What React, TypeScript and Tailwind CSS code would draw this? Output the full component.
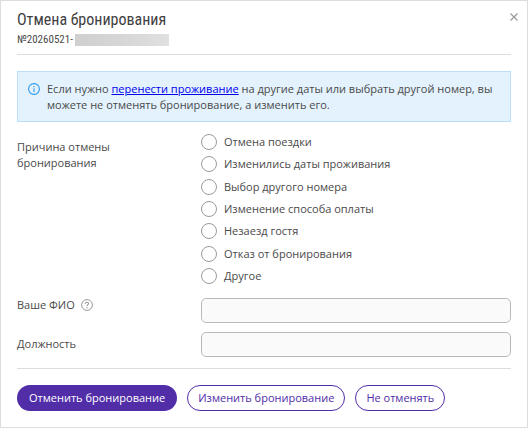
import { useId, useState } from "react";

const reasons = [
  "Отмена поездки",
  "Изменились даты проживания",
  "Выбор другого номера",
  "Изменение способа оплаты",
  "Незаезд гостя",
  "Отказ от бронирования",
  "Другое",
];

const condensed = "font-['Roboto_Condensed','Liberation_Sans_Narrow',Roboto,sans-serif]";

function InfoIcon() {
  return (
    <svg className="mt-[2px] size-3 shrink-0" viewBox="0 0 12 12" fill="none" stroke="#2b9af0" aria-hidden="true">
      <circle cx="6" cy="6" r="5.4" strokeWidth="1.1" />
      <path d="M6 5.2V9" strokeWidth="1.1" />
      <path d="M6 3V4.2" strokeWidth="1.1" />
    </svg>
  );
}

function HelpIcon() {
  return (
    <svg className="size-3 shrink-0" viewBox="0 0 12 12" fill="none" stroke="#999999" aria-hidden="true">
      <circle cx="6" cy="6" r="5.4" strokeWidth="1" />
      <path d="M4.4 4.8C4.4 3.7 5.1 3.2 6 3.2s1.6.5 1.6 1.4C7.6 5.6 6 5.7 6 7" strokeWidth="1.1" />
      <path d="M6 8.1V9.2" strokeWidth="1.1" />
    </svg>
  );
}

function Field({ label, help }: { label: string; help?: boolean }) {
  const id = useId();
  return (
    <div className={`grid grid-cols-[184px_1fr] ${help ? "items-start" : "items-center"}`}>
      <div className="flex items-center gap-[6px] pb-[2px] leading-[14px]">
        <label htmlFor={id}>{label}</label>
        {help && <HelpIcon />}
      </div>
      <input
        id={id}
        type="text"
        className="h-[25px] w-full rounded-[5px] border border-[#b9b9b9] bg-[#fafafa] px-2 outline-none focus:border-[#512da8]"
      />
    </div>
  );
}

export default function App() {
  const [reason, setReason] = useState("");
  const outline =
    "h-[26px] rounded-full border border-[#512da8] bg-white px-[10px] text-[#512da8]";

  return (
    <main className="min-h-screen border border-[#dddddd] bg-white px-4 pt-2 pb-4 font-['Open_Sans','Noto_Sans',sans-serif] text-[11px] leading-4 text-[#4a4a4a]">
      <header className="flex items-start justify-between border-b border-[#dddddd] pb-[5px]">
        <div>
          <h1 className={`text-[16px] leading-[22px] text-[#3f3f3f] ${condensed}`}>Отмена бронирования</h1>
          <div className={`flex items-center gap-[2px] text-[11px] leading-[18px] ${condensed}`}>
            <span>№20260521-</span>
            <span className="h-3 w-[94px] bg-linear-to-r from-[#cfcfcf] via-[#d6d6d6] to-[#e0e0e0]" />
          </div>
        </div>
        <button type="button" aria-label="Закрыть" className="-mr-2 mt-[3px] p-px">
          <svg className="size-2" viewBox="0 0 8 8" stroke="#999999" strokeWidth="1.2" aria-hidden="true">
            <path d="M.5.5l7 7M7.5.5l-7 7" />
          </svg>
        </button>
      </header>

      <div className="mt-4 flex gap-[7px] border border-[#bbdefb] bg-[#e3f2fd] px-[10px] pt-[9px] pb-2">
        <InfoIcon />
        <p>
          Если нужно{" "}
          <a href="#" className="text-[#0000ee] underline">
            перенести проживание
          </a>{" "}
          на другие даты или выбрать другой номер, вы можете не отменять бронирование, а изменить его.
        </p>
      </div>

      <form className="mt-2">
        <div role="radiogroup" aria-labelledby="reason" className="grid grid-cols-[184px_1fr]">
          <div id="reason" className="w-[120px] pt-[9px]">
            Причина отмены бронирования
          </div>
          <div className="flex min-h-[154px] flex-col justify-between pt-1">
            {reasons.map((r) => (
              <label key={r} className="flex items-center gap-[7px]">
                <input
                  type="radio"
                  name="reason"
                  checked={reason === r}
                  onChange={() => setReason(r)}
                  className="size-4 shrink-0 appearance-none rounded-full border border-[#9b9b9b] bg-white checked:border-[5px] checked:border-[#512da8]"
                />
                {r}
              </label>
            ))}
          </div>
        </div>
        <div className="mt-[14px] flex flex-col gap-[9px]">
          <Field label="Ваше ФИО" help />
          <Field label="Должность" />
        </div>
        <footer className="mt-[11px] flex flex-wrap gap-[10px] border-t border-[#dddddd] pt-4">
          <button type="button" className="h-[26px] rounded-full bg-[#512da8] px-3 font-medium text-white">
            Отменить бронирование
          </button>
          <button type="button" className={outline}>
            Изменить бронирование
          </button>
          <button type="button" className={outline}>
            Не отменять
          </button>
        </footer>
      </form>
    </main>
  );
}
